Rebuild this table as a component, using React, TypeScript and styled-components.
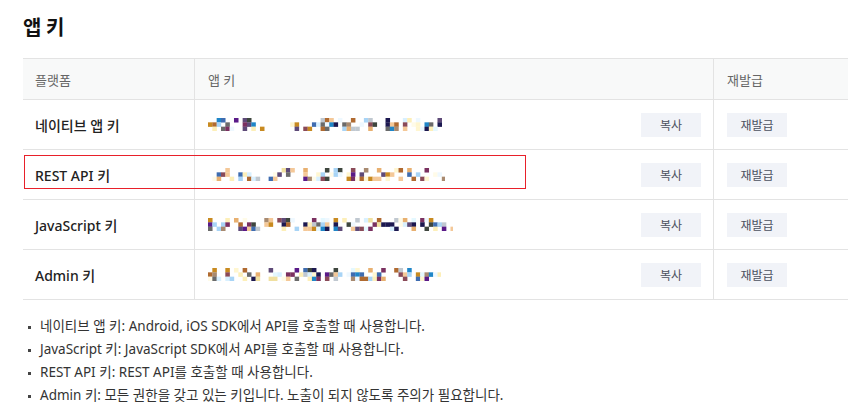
import React from "react";
import styled, { createGlobalStyle } from "styled-components";

const Global = createGlobalStyle`
  html, body { margin: 0; padding: 0; background: #fff; }
  body { font-family: "Noto Sans", "Noto Sans CJK KR", sans-serif; color: #222; }
`;

const Page = styled.div`
  padding: 12px 0 0 23px;
  width: 825px;
`;

const Title = styled.h2`
  margin: 0;
  font-family: "Noto Sans CJK KR", sans-serif;
  font-size: 20px;
  font-weight: 700;
  line-height: 30px;
  color: #111;
`;

const Table = styled.div`
  margin-top: 16px;
  display: grid;
  grid-template-columns: 172px 519px 134px;
  border-top: 1px solid #e3e3e3;
  position: relative;
`;

const Cell = styled.div<{ $head?: boolean; $last?: boolean; $pl?: number }>`
  height: ${(p) => (p.$head ? 41 : 50)}px;
  display: flex;
  align-items: center;
  padding-left: ${(p) => p.$pl ?? 12}px;
  box-sizing: border-box;
  border-bottom: 1px solid #e3e3e3;
  border-right: ${(p) => (p.$last ? "none" : "1px solid #e3e3e3")};
  background: ${(p) => (p.$head ? "#f8f9f9" : "#fff")};
  font-family: "Noto Sans", "Noto Sans CJK KR", sans-serif;
  font-size: ${(p) => (p.$head ? 13 : 14)}px;
  font-weight: ${(p) => (p.$head ? 400 : 500)};
  color: ${(p) => (p.$head ? "#666" : "#222")};
`;

const KeyCell = styled(Cell)`
  justify-content: space-between;
  padding-right: 12px;
`;

const Btn = styled.button`
  width: 60px;
  height: 24px;
  border: none;
  border-radius: 0;
  background: #f1f3f8;
  color: #4c5160;
  font-family: "Noto Sans CJK KR", sans-serif;
  font-size: 12px;
  padding: 0;
  cursor: pointer;
`;

const Highlight = styled.div`
  position: absolute;
  left: 1px;
  top: 96px;
  width: 502px;
  height: 34px;
  border: 1px solid #e8202a;
  box-sizing: border-box;
  pointer-events: none;
`;

const Notes = styled.ul`
  list-style: none;
  margin: 15px 0 0;
  padding: 0;
`;

const Note = styled.li`
  position: relative;
  padding-left: 17px;
  font-family: "Noto Sans", "Noto Sans CJK KR", sans-serif;
  font-size: 13.5px;
  line-height: 23px;
  color: #333;
  &::before {
    content: "";
    position: absolute;
    left: 5px;
    top: 11px;
    width: 3px;
    height: 3px;
    background: #444;
  }
`;

const palette = [
  "#fff6d0", "#fdefb8", "#d8f0ff", "#a8d4f6", "#e8b070", "#f4c898",
  "#c88a20", "#b06a30", "#8a4a58", "#5e4a78", "#5a1a88", "#1c1850",
  "#3e6cb0", "#1f86c8", "#6a6a6a", "#3e463e", "#a88a70", "#e4f8ff",
  "#c0c8d0", "#7a3060", "#f0e0a0", "#fffbe8", "#eef8ff",
];

function mulberry(seed: number) {
  return () => {
    seed |= 0;
    seed = (seed + 0x6d2b79f5) | 0;
    let t = Math.imul(seed ^ (seed >>> 15), 1 | seed);
    t = (t + Math.imul(t ^ (t >>> 7), 61 | t)) ^ t;
    return ((t ^ (t >>> 14)) >>> 0) / 4294967296;
  };
}

const Mosaic: React.FC<{ seed: number; width: number; gap: [number, number] }> = ({ seed, width, gap }) => {
  const rnd = mulberry(seed);
  const cs = 4.33;
  const cols = Math.round(width / cs);
  const rects: React.ReactNode[] = [];
  for (let r = 0; r < 3; r++) {
    for (let c = 0; c < cols; c++) {
      if (c >= gap[0] && c < gap[1]) continue;
      const v = rnd();
      if (v < (r === 0 ? 0.6 : 0.45)) continue;
      const col = palette[Math.floor(rnd() * palette.length)];
      rects.push(
        <rect key={`${r}-${c}`} x={c * cs} y={r * cs} width={cs + 0.2} height={cs + 0.2} fill={col} />
      );
    }
  }
  return (
    <svg width={width} height={13} viewBox={`0 0 ${width} 13`} style={{ display: "block" }}>
      {rects}
    </svg>
  );
};

const rows = [
  { name: "네이티브 앱 키", seed: 11, width: 234, gap: [13, 19] as [number, number] },
  { name: "REST API 키", seed: 27, width: 237, gap: [20, 22] as [number, number] },
  { name: "JavaScript 키", seed: 43, width: 245, gap: [0, 0] as [number, number] },
  { name: "Admin 키", seed: 59, width: 233, gap: [0, 0] as [number, number] },
];

export default function App() {
  return (
    <>
      <Global />
      <Page>
        <Title>앱 키</Title>
        <Table>
          <Cell $head>플랫폼</Cell>
          <Cell $head $pl={13}>앱 키</Cell>
          <Cell $head $last $pl={13}>재발급</Cell>
          {rows.map((r) => (
            <React.Fragment key={r.name}>
              <Cell>{r.name}</Cell>
              <KeyCell $pl={13}>
                <Mosaic seed={r.seed} width={r.width} gap={r.gap} />
                <Btn>복사</Btn>
              </KeyCell>
              <Cell $last $pl={13}>
                <Btn>재발급</Btn>
              </Cell>
            </React.Fragment>
          ))}
          <Highlight />
        </Table>
        <Notes>
          <Note>네이티브 앱 키: Android, iOS SDK에서 API를 호출할 때 사용합니다.</Note>
          <Note>JavaScript 키: JavaScript SDK에서 API를 호출할 때 사용합니다.</Note>
          <Note>REST API 키: REST API를 호출할 때 사용합니다.</Note>
          <Note>Admin 키: 모든 권한을 갖고 있는 키입니다. 노출이 되지 않도록 주의가 필요합니다.</Note>
        </Notes>
      </Page>
    </>
  );
}
